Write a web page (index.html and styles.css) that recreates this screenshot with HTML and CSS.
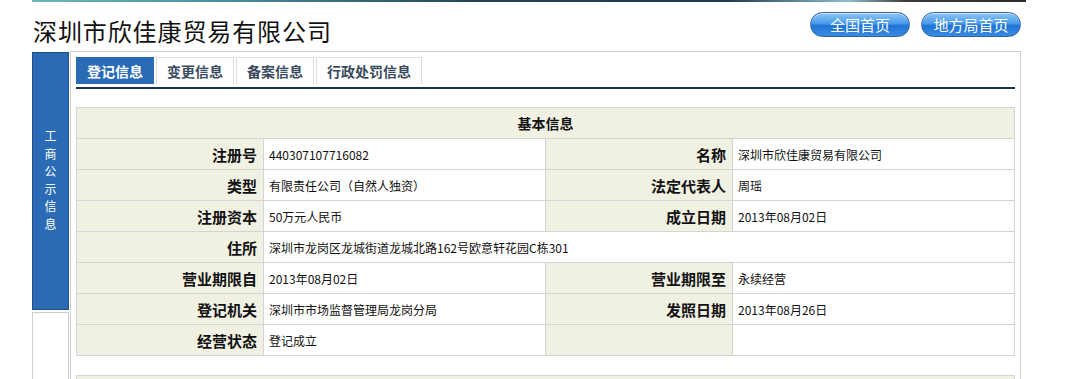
FILE: index.html
```html
<!DOCTYPE html>
<html lang="zh-CN">
  <head>
    <meta charset="UTF-8" />
    <meta name="viewport" content="width=device-width, initial-scale=1.0" />
    <title>深圳市欣佳康贸易有限公司</title>
    <link rel="stylesheet" href="styles.css">
  </head>
  <body>
    <div class="page">
      <div class="top-line"></div>
      <header class="header">
        <h1 class="company">深圳市欣佳康贸易有限公司</h1>
        <nav class="links">
          <a class="pill" href="#">全国首页</a>
          <a class="pill" href="#">地方局首页</a>
        </nav>
      </header>
      <div class="body-wrap">
        <aside class="side">
          <div class="side-active">
            <div class="side-text">工商公示信息</div>
          </div>
          <div class="side-blank"></div>
        </aside>
        <main class="content">
          <ul class="tabs">
            <li class="tab active">登记信息</li>
            <li class="tab">变更信息</li>
            <li class="tab">备案信息</li>
            <li class="tab">行政处罚信息</li>
          </ul>
          <table class="info">
            <colgroup>
              <col class="col-label" />
              <col class="col-value" />
              <col class="col-label" />
              <col class="col-value" />
            </colgroup>
            <tr>
              <th colspan="4" class="caption">基本信息</th>
            </tr>
            <tr>
              <th>注册号</th>
              <td>440307107716082</td>
              <th>名称</th>
              <td>深圳市欣佳康贸易有限公司</td>
            </tr>
            <tr>
              <th>类型</th>
              <td>有限责任公司（自然人独资）</td>
              <th>法定代表人</th>
              <td>周瑶</td>
            </tr>
            <tr>
              <th>注册资本</th>
              <td>50万元人民币</td>
              <th>成立日期</th>
              <td>2013年08月02日</td>
            </tr>
            <tr>
              <th>住所</th>
              <td colspan="3">深圳市龙岗区龙城街道龙城北路162号欧意轩花园C栋301</td>
            </tr>
            <tr>
              <th>营业期限自</th>
              <td>2013年08月02日</td>
              <th>营业期限至</th>
              <td>永续经营</td>
            </tr>
            <tr>
              <th>登记机关</th>
              <td>深圳市市场监督管理局龙岗分局</td>
              <th>发照日期</th>
              <td>2013年08月26日</td>
            </tr>
            <tr>
              <th>经营状态</th>
              <td>登记成立</td>
              <th></th>
              <td></td>
            </tr>
          </table>
          <div class="next-block"></div>
        </main>
      </div>
    </div>
  </body>
</html>
```

FILE: styles.css
```css
* {
  box-sizing: border-box;
}

html,
body {
  margin: 0;
  height: 100%;
  overflow: hidden;
  background: #fff;
  font-family: "Noto Sans CJK SC", "Liberation Sans", sans-serif;
  color: #111;
}

.page {
  width: 994px;
  height: 379px;
  margin-left: 32px;
  overflow: hidden;
}

.top-line {
  height: 2px;
  background: linear-gradient(
    to right,
    #6fb4c0 0%,
    #4a8c9c 20%,
    #22425a 45%,
    #1e3a52 70%,
    #8fc0cc 82%,
    #3a3a3a 88%,
    #2a2a2a 100%
  );
}

.header {
  display: flex;
  justify-content: space-between;
  height: 49px;
}

.company {
  margin: 15px 0 0 1px;
  font-size: 24px;
  font-weight: normal;
  letter-spacing: 0.9px;
  line-height: 28px;
}

.links {
  display: flex;
  gap: 11px;
  margin: 10px 5px 0 0;
}

.pill {
  display: block;
  width: 100px;
  height: 25px;
  border: 1px solid #2f63a8;
  border-radius: 13px;
  background: linear-gradient(#8cc6f6 0%, #4b9be8 45%, #1f74d6 55%, #3a8ae0 100%);
  box-shadow: inset 0 1px 0 rgba(255, 255, 255, 0.6);
  color: #fff;
  font-size: 15px;
  line-height: 23px;
  text-align: center;
  text-decoration: none;
}

.body-wrap {
  display: flex;
  gap: 1px;
}

.side {
  width: 37px;
  padding-top: 1px;
}

.side-active {
  height: 258px;
  background: #2b6bb6;
  border: 1px solid #1f4f8a;
  padding-top: 74px;
}

.side-text {
  width: 12px;
  margin: 0 auto;
  color: #fff;
  font-size: 12px;
  line-height: 17.6px;
}

.side-blank {
  height: 67px;
  margin-top: 2px;
  border: 1px solid #cfcfcf;
  border-bottom: none;
}

.content {
  width: 951px;
  height: 328px;
  border: 1px solid #cfcfcf;
  border-bottom: none;
  padding: 5px 5px 0 5px;
  overflow: hidden;
}

.tabs {
  display: flex;
  gap: 2px;
  margin: 0;
  padding: 0 0 3px 0;
  list-style: none;
  border-bottom: 2px solid #1b3148;
}

.tab {
  height: 27px;
  padding: 0 10px;
  border: 1px solid #dcdcdc;
  border-bottom: none;
  color: #3a4a5c;
  font-size: 14px;
  font-weight: bold;
  line-height: 26px;
}

.tab.active {
  background: #2a6bb5;
  border-color: #2a6bb5;
  color: #fff;
}

.info {
  width: 939px;
  margin-top: 18px;
  border-collapse: collapse;
  table-layout: fixed;
}

.col-label {
  width: 187px;
}

.col-value {
  width: 282px;
}

.info th,
.info td {
  height: 31px;
  border: 1px solid #d4d4d4;
  padding: 0;
}

.info th {
  background: #f1f1e3;
  padding-right: 6px;
  font-size: 15px;
  font-weight: bold;
  text-align: right;
}

.info td {
  padding-left: 5px;
  font-size: 12px;
  text-align: left;
}

.info th.caption {
  text-align: center;
  padding-right: 0;
  font-size: 14px;
}

.next-block {
  width: 939px;
  height: 20px;
  margin-top: 19px;
  background: #f1f1e3;
  border: 1px solid #d4d4d4;
}
```
